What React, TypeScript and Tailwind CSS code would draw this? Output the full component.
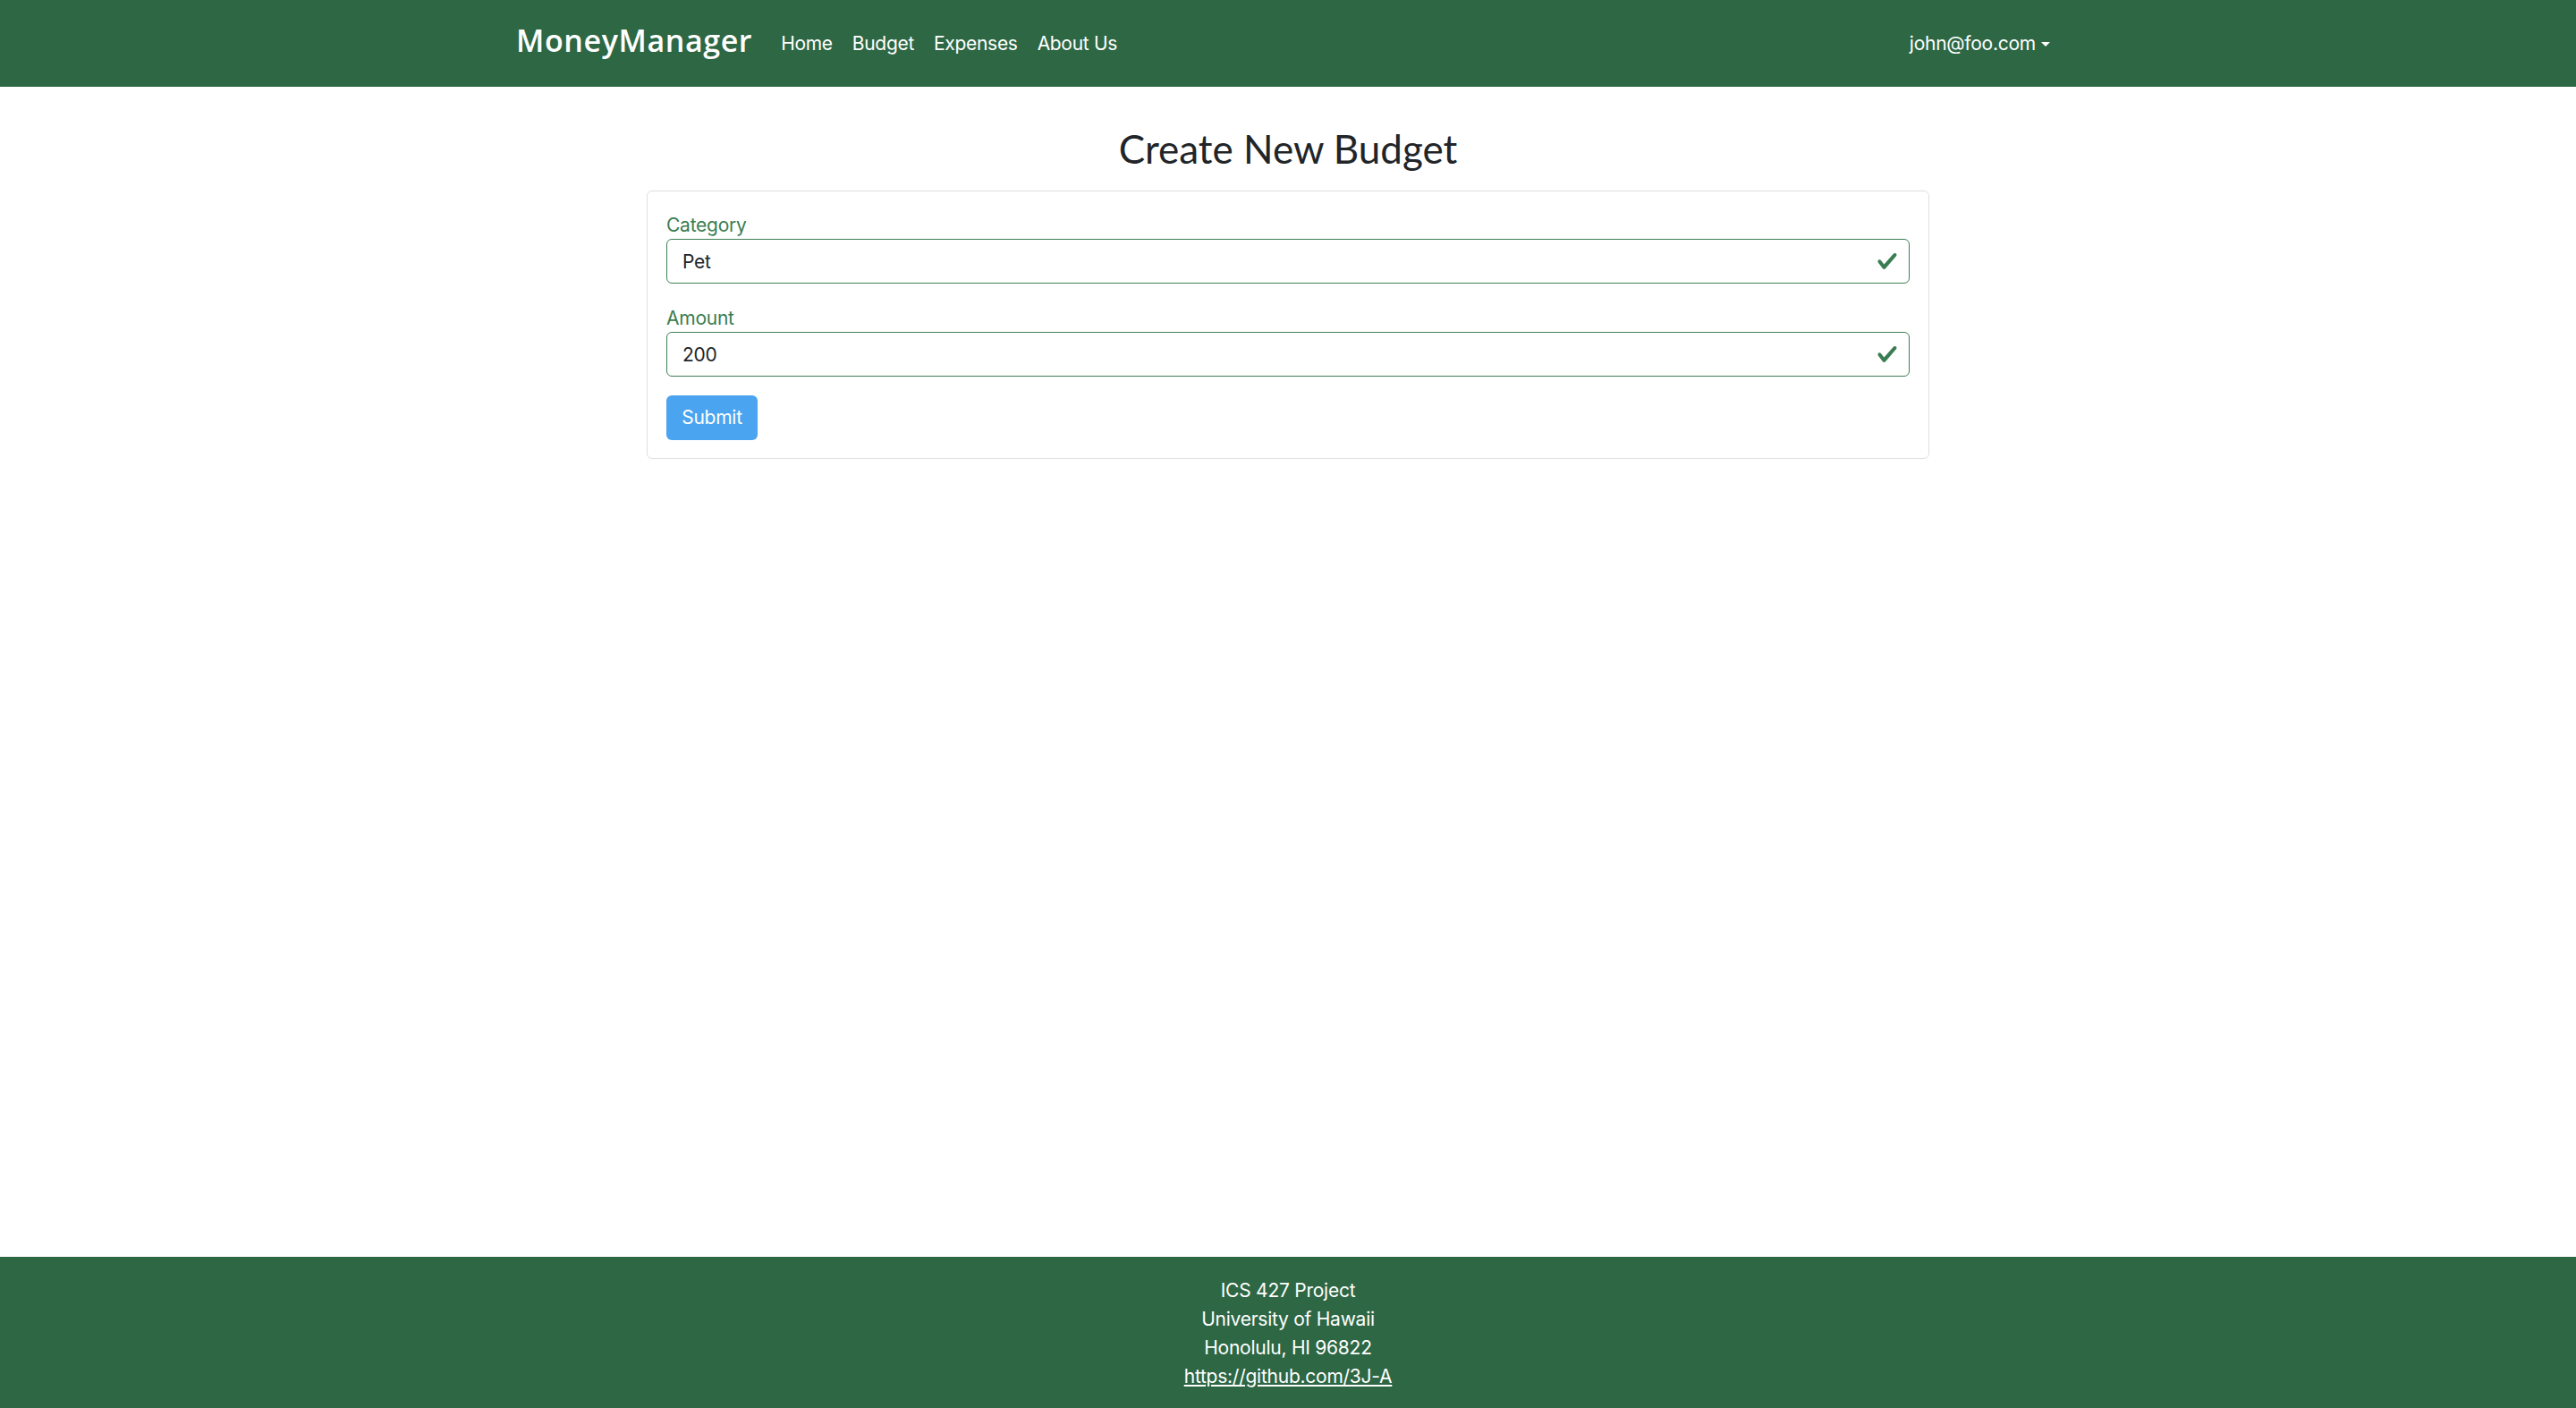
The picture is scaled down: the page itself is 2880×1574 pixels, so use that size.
import type { ReactNode } from 'react';

const navLinks = ['Home', 'Budget', 'Expenses', 'About Us'];

function CheckIcon() {
  return (
    <svg className="absolute right-[13px] top-1/2 -translate-y-1/2 w-[24px] h-[24px]" viewBox="0 0 8 8">
      <path
        fill="#3b7d52"
        d="M2.3 6.73L.6 4.53c-.4-1.04.46-1.4 1.1-.8l1.1 1.4 3.4-3.8c.6-.63 1.6-.27 1.2.7l-4 4.6c-.43.5-.8.4-1.1.1z"
      />
    </svg>
  );
}

function Field({ label, value, children }: { label: string; value: string; children?: ReactNode }) {
  return (
    <div className="mb-[25px]">
      <label className="block pt-[1px] text-[21px] tracking-[-0.25px] leading-[26px] text-[#3a7d50] mb-[2px]">{label}</label>
      <div className="relative">
        <input
          readOnly
          value={value}
          className="block w-full h-[50px] rounded-[6px] border border-[#3f8056] bg-white pl-[17px] pr-[50px] text-[21px] tracking-[-0.25px] text-[#212529] outline-none font-['Inter',sans-serif]"
        />
        <CheckIcon />
      </div>
      {children}
    </div>
  );
}

export default function App() {
  return (
    <div className="min-h-screen flex flex-col bg-white font-['Inter',sans-serif] antialiased">
      {/* Top navbar */}
      <header className="w-full bg-[#2d6744] h-[97px] shrink-0">
        <div className="w-[1726px] mx-auto h-full flex items-center">
          <span className="-mt-[8px] mr-[21px] text-white text-[34px] leading-[34px] font-semibold font-['Open_Sans',sans-serif] tracking-[0.6px]">
            MoneyManager
          </span>
          <nav className="flex items-center">
            {navLinks.map((link) => (
              <a key={link} className="px-[11px] text-white text-[21px] tracking-[-0.3px] leading-[33px]">
                {link}
              </a>
            ))}
          </nav>
          <div className="ml-auto flex items-center pr-[11px] text-white text-[21px] tracking-[-0.25px] leading-[33px]">
            john@foo.com
            <span className="ml-[6px] mt-[1px] w-0 h-0 border-l-[5px] border-r-[5px] border-t-[5px] border-l-transparent border-r-transparent border-t-white" />
          </div>
        </div>
      </header>

      {/* Main */}
      <main className="flex-1 pt-[43px]">
        <h2 className="text-center text-[44px] leading-[53px] text-[#212529] font-['Lato',sans-serif] mb-[20px]">
          Create New Budget
        </h2>
        <div className="w-[1434px] mx-auto border border-[#dfdfdf] rounded-[6px] pt-[24px] pb-[20px] px-[21px]">
          <Field label="Category" value="Pet" />
          <Field label="Amount" value="200" />
          <button className="-mt-[4px] block h-[50px] w-[102px] rounded-[6px] bg-[#4ba4f0] text-white text-[21px] tracking-[-0.25px]">
            Submit
          </button>
        </div>
      </main>

      {/* Footer */}
      <footer className="w-full bg-[#2d6744] pt-[22px] pb-[19px] text-center text-white text-[21px] tracking-[-0.25px] leading-[32px]">
        <div>ICS 427 Project</div>
        <div>University of Hawaii</div>
        <div>Honolulu, HI 96822</div>
        <div>
          <a className="underline">https://github.com/3J-A</a>
        </div>
      </footer>
    </div>
  );
}
